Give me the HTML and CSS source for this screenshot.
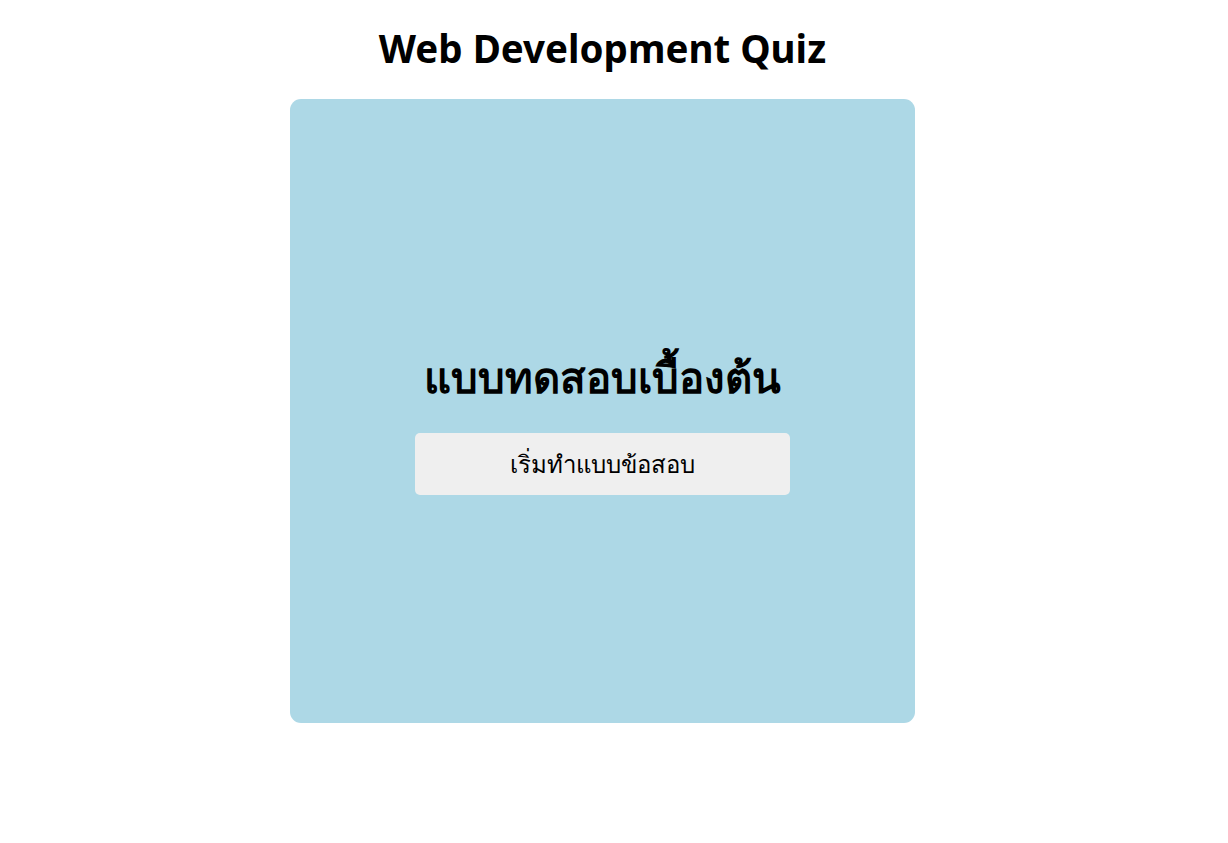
FILE: index.html
```html
<!DOCTYPE html>
<html lang="th">
<head>
<meta charset="utf-8">
<title>Web Development Quiz</title>
<link rel="stylesheet" href="styles.css">
</head>
<body>
  <h1 class="page-title">Web Development Quiz</h1>
  <main class="quiz-card">
    <h2 class="quiz-heading">แบบทดสอบเบื้องต้น</h2>
    <button class="start-btn" type="button">เริ่มทำแบบข้อสอบ</button>
  </main>
</body>
</html>
```
FILE: styles.css
```css
html, body {
  margin: 0;
  padding: 0;
  background: #fff;
}
body {
  font-family: "Noto Sans", "Open Sans", sans-serif;
  color: #000;
  display: flex;
  flex-direction: column;
  align-items: center;
  padding-right: 23px;
}
.page-title {
  margin: 24px 0 0;
  height: 75px;
  font-size: 38.5px;
  line-height: 48px;
  font-weight: 700;
  text-align: center;
}
.quiz-card {
  box-sizing: border-box;
  width: 625px;
  height: 624px;
  background: #add8e6;
  border-radius: 11px;
  display: flex;
  flex-direction: column;
  align-items: center;
  justify-content: center;
  padding-top: 24px;
}
.quiz-heading {
  margin: 0 0 30px;
  font-size: 42px;
  line-height: 52px;
  font-weight: 700;
}
.start-btn {
  width: 375px;
  height: 62px;
  background: #efefef;
  border: none;
  border-radius: 5px;
  font-family: inherit;
  font-size: 24px;
  color: #000;
  cursor: pointer;
}
```
